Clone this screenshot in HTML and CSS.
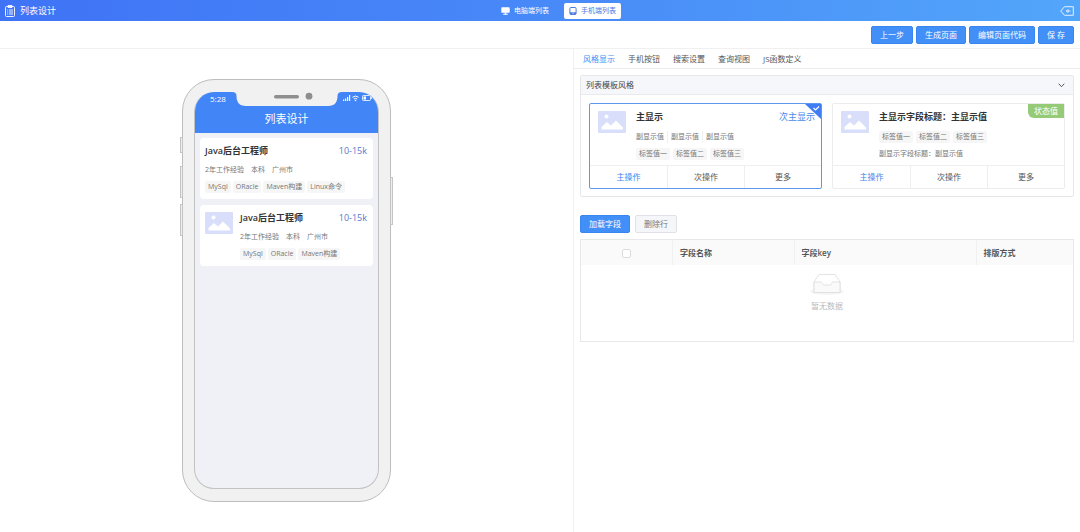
FILE: index.html
```html
<!DOCTYPE html>
<html lang="zh-CN">
<head>
<meta charset="utf-8">
<meta name="viewport" content="width=device-width, initial-scale=1">
<title>列表设计</title>
<link rel="stylesheet" href="styles.css">
</head>
<body>
<svg class="defs" width="0" height="0" aria-hidden="true">
  <symbol id="picture" viewBox="0 0 28 22">
    <rect width="28" height="22" rx="1" fill="#d9dffb"/>
    <circle cx="8.500" cy="5.500" r="2" fill="#fff"/>
    <path d="M3.500 18.500V16L9 11L13 14.500L18 9.500L25 16.500V18.500Z" fill="#fff"/>
  </symbol>
</svg>

<header class="topbar">
  <div class="brand">
    <svg width="10" height="12" viewBox="0 0 10 12" fill="none" stroke="#fff" stroke-width=".9"><rect x=".5" y="1.500" width="9" height="10" rx="1"/><path d="M3 .5h4v2H3zM2.200 5h1M4 5h4M2.200 7h1M4 7h4M2.200 9h1M4 9h4"/></svg>
    <h1>列表设计</h1>
  </div>
  <nav class="modes">
    <button class="mode" type="button"><svg width="9" height="8" viewBox="0 0 9 8" fill="currentColor"><rect x=".3" y=".3" width="8.400" height="5.400" rx=".8"/><path d="M3.800 5.500h1.400v1.300h1.600v.9H2.200v-.9h1.600z"/></svg>电脑端列表</button>
    <button class="mode mode-on" type="button"><svg width="8" height="8" viewBox="0 0 8 8"><rect x=".9" y=".5" width="6.200" height="7" rx="1" fill="none" stroke="#4a7be0"/><path d="M1 5.200h6v2H1z" fill="#4a7be0"/><path d="M3.200 6.200h1.600" stroke="#fff" stroke-width=".7"/></svg>手机端列表</button>
  </nav>
  <button class="back" type="button" aria-label="返回"><svg width="14" height="10" viewBox="0 0 14 10" fill="none" stroke="#e4f1ff"><path d="M4.500.7h8.800v8.600H4.500L.7 5z"/><path d="M6 5l2.200-1.300v2.600zM8 5h2.500" stroke-width=".9"/></svg></button>
</header>

<div class="toolbar">
  <button class="btn btn-primary" type="button">上一步</button>
  <button class="btn btn-primary" type="button">生成页面</button>
  <button class="btn btn-primary" type="button">编辑页面代码</button>
  <button class="btn btn-primary" type="button">保 存</button>
</div>

<main class="workspace">
  <section class="preview">
    <div class="phone">
      <i class="key key-mute"></i><i class="key key-up"></i><i class="key key-down"></i><i class="key key-power"></i>
      <div class="screen">
        <div class="status">
          <span class="clock">5:28</span>
          <svg class="notch" width="110" height="14" viewBox="0 0 110 14"><path d="M0 0C3 0 4.500 1 4.500 4C4.500 10 7 14 14 14H96C103 14 105.500 10 105.500 4C105.500 1 107 0 110 0Z" fill="#f1f1f1"/><rect x="42" y="3" width="25" height="3.400" rx="1.700" fill="#8e8e8e"/><circle cx="77" cy="4.200" r="3.400" fill="#8e8e8e"/></svg>
          <svg class="signals" width="30" height="8" viewBox="0 0 30 8"><path d="M0 7V5.500h1.200V7zM2 7V4.500h1.200V7zM4 7V3h1.200V7zM6 7V1h1.200v6z" fill="#fff"/><path d="M9.500 3.300q3-2.600 6 0M10.900 5q1.600-1.400 3.200 0" fill="none" stroke="#fff"/><circle cx="12.500" cy="6.500" r=".8" fill="#fff"/><rect x="19.500" y="1.500" width="8" height="5" rx=".8" fill="none" stroke="#fff" stroke-width=".8"/><path d="M20.500 2.500h2.500v3h-2.500zM28 3.200h1v1.600h-1z" fill="#fff"/></svg>
        </div>
        <h2 class="screen-title">列表设计</h2>
        <div class="jobs">
          <article class="job">
            <div class="job-body">
              <div class="line"><h3>Java后台工程师</h3><span class="pay">10-15k</span></div>
              <p class="facts"><span>2年工作经验</span><span>本科</span><span>广州市</span></p>
              <p class="tags"><span>MySql</span><span>ORacle</span><span>Maven构建</span><span>Linux命令</span></p>
            </div>
          </article>
          <article class="job">
            <svg class="pic" width="28" height="22"><use href="#picture"/></svg>
            <div class="job-body">
              <div class="line"><h3>Java后台工程师</h3><span class="pay">10-15k</span></div>
              <p class="facts"><span>2年工作经验</span><span>本科</span><span>广州市</span></p>
              <p class="tags"><span>MySql</span><span>ORacle</span><span>Maven构建</span></p>
            </div>
          </article>
        </div>
      </div>
    </div>
  </section>

  <section class="settings">
    <nav class="tabs">
      <button class="tab tab-on" type="button">风格显示</button>
      <button class="tab" type="button">手机按钮</button>
      <button class="tab" type="button">搜索设置</button>
      <button class="tab" type="button">查询视图</button>
      <button class="tab" type="button">JS函数定义</button>
    </nav>
    <div class="content">
      <div class="panel">
        <button class="panel-head" type="button">列表模板风格<svg width="7" height="5" viewBox="0 0 7 5" fill="none" stroke="#555"><path d="M.7.7l2.800 3 2.800-3"/></svg></button>
        <div class="templates">
          <article class="template template-on">
            <svg class="corner" width="16" height="15" viewBox="0 0 16 15"><path d="M0 0h16v15z" fill="#3f7df5"/><path d="M8.500 4l2 2 3.500-3.500" fill="none" stroke="#fff" stroke-width="1.200"/></svg>
            <div class="template-main">
              <svg class="pic" width="28" height="22"><use href="#picture"/></svg>
              <div class="template-body">
                <div class="line"><h3>主显示</h3><span class="second">次主显示</span></div>
                <p class="facts"><span>副显示值</span><span>副显示值</span><span>副显示值</span></p>
                <p class="tags"><span>标签值一</span><span>标签值二</span><span>标签值三</span></p>
              </div>
            </div>
            <div class="actions"><button class="act act-on" type="button">主操作</button><button class="act" type="button">次操作</button><button class="act" type="button">更多</button></div>
          </article>
          <article class="template">
            <span class="state">状态值</span>
            <div class="template-main">
              <svg class="pic" width="28" height="22"><use href="#picture"/></svg>
              <div class="template-body">
                <div class="line"><h3>主显示字段标题：主显示值</h3></div>
                <p class="tags"><span>标签值一</span><span>标签值二</span><span>标签值三</span></p>
                <p class="facts">副显示字段标题：副显示值</p>
              </div>
            </div>
            <div class="actions"><button class="act act-on" type="button">主操作</button><button class="act" type="button">次操作</button><button class="act" type="button">更多</button></div>
          </article>
        </div>
      </div>

      <div class="field-tools">
        <button class="btn btn-primary" type="button">加载字段</button>
        <button class="btn btn-plain" type="button">删除行</button>
      </div>
      <table class="fields">
        <colgroup><col class="col-pick"><col class="col-name"><col class="col-key"><col></colgroup>
        <thead><tr><th class="pick"><input class="check" type="checkbox" aria-label="全选"></th><th>字段名称</th><th>字段key</th><th>排版方式</th></tr></thead>
        <tbody><tr><td colspan="4">
          <svg width="34" height="22" viewBox="0 0 34 22" fill="none" stroke="#dcdcdc" stroke-width=".8"><ellipse cx="17" cy="18.500" rx="17" ry="3.500" fill="#f5f5f5" stroke="none"/><path d="M4 9l5-7.500h16L30 9v10.500H4z" fill="#fff"/><path d="M4 9h7.500c.8 0 .8 3 2 3h7c1.200 0 1.200-3 2-3H30v10.500H4z" fill="#fafafa"/></svg>
          <p class="empty">暂无数据</p>
        </td></tr></tbody>
      </table>
    </div>
  </section>
</main>
</body>
</html>
```
FILE: styles.css
```css
* { box-sizing: border-box; }

body {
  margin: 0;
  min-height: 100vh;
  display: flex;
  flex-direction: column;
  background: #fff;
  color: #555;
  font: 8px/12px "Open Sans", "Noto Sans CJK SC", sans-serif;
}

h1, h2, h3, p { margin: 0; }
button { font: inherit; color: inherit; border: 0; padding: 0; background: none; cursor: pointer; }
svg { display: block; flex: none; }
.defs { position: absolute; }

/* Top bar */
.topbar {
  display: grid;
  grid-template-columns: 1fr auto 1fr;
  align-items: center;
  height: 21px;
  padding: 0 6px 0 5px;
  background: linear-gradient(90deg, #3f73f6, #4889f8 50%, #52a6fa);
  color: #fff;
}
.brand { display: flex; align-items: center; gap: 5px; }
.brand h1 { font-size: 9px; font-weight: 400; }
.modes { display: flex; gap: 10px; padding-left: 38px; }
.mode {
  display: flex;
  align-items: center;
  gap: 4px;
  height: 16px;
  padding: 0 5px;
  border-radius: 2px;
  font-size: 7px;
}
.mode-on { background: #fff; color: #4a7be0; }
.back { justify-self: end; }

/* Page actions */
.toolbar {
  display: flex;
  justify-content: flex-end;
  align-items: center;
  gap: 3px;
  height: 28px;
  padding-right: 6px;
  border-bottom: 1px solid #f0f0f0;
}
.btn { height: 18px; padding: 0 8px; border-radius: 2px; line-height: 16px; white-space: nowrap; }
.btn-primary { background: #4290f7; border: 1px solid #3a86f0; color: #fff; }
.btn-plain { background: #f5f6f9; border: 1px solid #dfe1e6; color: #777; }

/* Columns */
.workspace { flex: 1; display: grid; grid-template-columns: 573fr 507fr; }
.preview { display: flex; justify-content: center; align-items: flex-start; padding: 30px 0; }
.settings { border-left: 1px solid #f0f0f0; min-width: 0; }

/* Phone */
.phone {
  position: relative;
  width: 209px;
  padding: 12px 11px;
  border: 1px solid #bdbdbd;
  border-radius: 32px;
  background: #f1f1f1;
}
.key { position: absolute; left: -3px; width: 3px; border: 1px solid #c4c4c4; background: #eee; }
.key-mute { top: 57px; height: 16px; }
.key-up { top: 86px; height: 32px; }
.key-down { top: 124px; height: 32px; }
.key-power { left: auto; right: -3px; top: 97px; height: 48px; }
.screen {
  height: 397px;
  overflow: hidden;
  border: 1px solid #c2c2c2;
  border-top: 0;
  border-radius: 20px;
  background: #eff1f7;
}
.status {
  display: grid;
  grid-template-columns: 1fr auto 1fr;
  align-items: start;
  background: #4285f7;
  color: #fff;
}
.clock { padding-left: 15px; line-height: 13px; }
.signals { justify-self: end; margin: 2px 5px 0 0; }
.screen-title {
  padding: 5px 0 6px;
  background: #4285f7;
  color: #fff;
  font-size: 11px;
  font-weight: 400;
  line-height: 16px;
  text-align: center;
}
.jobs { display: flex; flex-direction: column; gap: 6px; padding: 5px; }
.job { display: flex; gap: 7px; padding: 6px 6px 6px 5px; border-radius: 4px; background: #fff; }
.job-body, .template-body { flex: 1; min-width: 0; }
.job .line { margin-bottom: 7px; }
.line { display: flex; justify-content: space-between; align-items: center; line-height: 14px; }
.line h3 { color: #333; font-size: 9px; font-weight: 600; }
.pay { color: #5878cc; font-size: 9px; }
.facts, .tags { display: flex; font-size: 7px; white-space: nowrap; color: #777; }
.facts { gap: 7px; line-height: 10px; }
.tags { gap: 2px; margin-top: 6px; }
.tags span { padding: 0 3px; background: #f6f6f6; border-radius: 2px; line-height: 12px; }
.job .pic { margin-top: 1px; }

/* Setting tabs */
.tabs { display: flex; gap: 13px; height: 20px; padding-left: 9px; border-bottom: 1px solid #ececec; }
.tab-on { color: #3d8ef5; }
.content { padding: 6px; }

/* Template panel */
.panel { border: 1px solid #e6e7ea; border-radius: 2px; }
.panel-head {
  display: flex;
  justify-content: space-between;
  align-items: center;
  width: 100%;
  height: 19px;
  padding: 0 8px 0 5px;
  border-bottom: 1px solid #e9eaed;
  background: #f6f7fb;
  color: #444;
}
.templates { display: grid; grid-template-columns: 1fr 1fr; gap: 10px; padding: 8px 8px 7px; }
.template { position: relative; border: 1px solid #ececec; border-radius: 2px; }
.template-on { border-color: #5b98ee; }
.corner { position: absolute; top: 0; right: 0; }
.template-main { display: flex; gap: 10px; height: 61px; padding: 7px 6px 0 8px; }
.template .facts { line-height: 12px; }
.template .line { margin: -1px 0 7px; }
.template .tags { gap: 3px; margin: 5px 0; }
.template .facts span + span { padding-left: 3px; border-left: 1px solid #f0f0f0; }
.template .facts { gap: 3px; }
.second { color: #4a8be8; font-size: 9px; }
.state {
  position: absolute;
  top: 0;
  right: 0;
  padding: 0 6px;
  border-radius: 0 0 0 6px;
  background: #95cb77;
  color: #fff;
  line-height: 14px;
}
.actions { display: grid; grid-template-columns: repeat(3, 1fr); height: 23px; border-top: 1px solid #efefef; }
.act + .act { border-left: 1px solid #efefef; }
.act-on { color: #3d86f0; }

/* Field table */
.field-tools { display: flex; gap: 5px; margin: 18px 0 6px; }
.fields {
  width: 100%;
  table-layout: fixed;
  border-collapse: separate;
  border-spacing: 0;
  border: 1px solid #e8e8e8;
}
.col-pick { width: 18.5%; }
.col-name { width: 24.7%; }
.col-key { width: 37%; }
.fields th {
  height: 25px;
  padding: 0 7px;
  background: #fafafa;
  color: #555;
  font-weight: 600;
  text-align: left;
}
.fields th + th { border-left: 1px solid #f0f0f0; }
.fields .pick { text-align: center; }
.check {
  appearance: none;
  width: 9px;
  height: 9px;
  margin: 0;
  border: 1px solid #dcdcdc;
  border-radius: 2px;
  background: #fff;
  vertical-align: middle;
}
.fields td { height: 76px; padding: 8px 0; text-align: center; vertical-align: top; color: #bbb; }
.fields td svg { margin: 0 auto; }
.empty { margin-top: 5px; }
```
